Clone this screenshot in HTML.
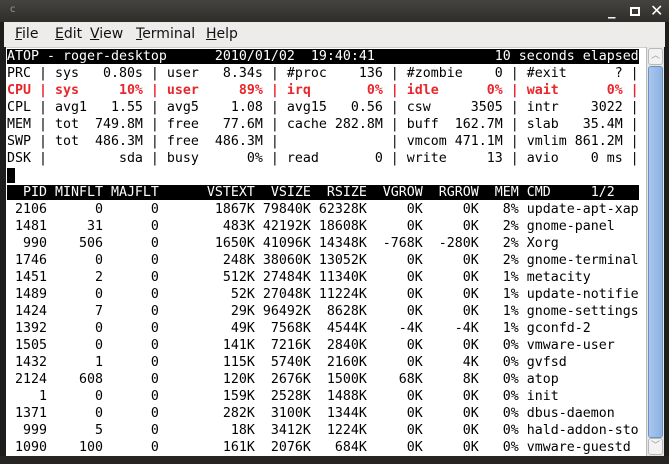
<!DOCTYPE html>
<html><head><meta charset="utf-8"><style>
*{margin:0;padding:0;box-sizing:border-box}
body{width:669px;height:464px;overflow:hidden;background:#1e1d1b;position:relative;font-family:"DejaVu Sans","Liberation Sans",sans-serif}
#title{position:absolute;left:0;top:0;width:669px;height:22px;background:linear-gradient(#45433f,#2f2e2b)}
#menu{position:absolute;left:4px;top:22px;width:661px;height:25px;background:#edeceb;font-size:14px;color:#111}
#menu span{position:absolute;top:4px}
#menu u{text-decoration:underline}
#term{position:absolute;left:6px;top:47px;width:640px;height:409px;background:#fff;border-top:1px solid #cfcfcf}
pre{position:absolute;left:7px;top:48px;font-family:"DejaVu Sans Mono","Liberation Mono",monospace;font-size:13.29px;line-height:17px;color:#000;white-space:pre}
.inv{background:#000;color:#fff}
.red{color:#e8262b;font-weight:bold}
#sb{position:absolute;left:646px;top:47px;width:18px;height:409px;background:#e6e6e6;border-left:1px solid #bbb}
#thumb{position:absolute;left:648px;top:66px;width:15px;height:372px;background:linear-gradient(90deg,#a9c7ec,#8bb2e2);border:1px solid #6a92c4;border-radius:3px}
.btn{position:absolute;left:648px;width:15px;height:17px;background:#f2f2f2;border:1px solid #b8b8b8;border-radius:3px;color:#999;font-size:9px;text-align:center;line-height:15px}
#bottom{position:absolute;left:0;top:456px;width:669px;height:8px;background:#262523}
.wb{position:absolute;top:3px;color:#fff;font-size:15px;font-weight:bold}
</style></head><body>
<div id="title"></div>
<span style="position:absolute;left:10px;top:4px;color:#999;font-size:10px">c</span>
<span class="wb" style="left:608px;top:1px">_</span>
<span style="position:absolute;left:630px;top:7px;width:10px;height:9px;border:2px solid #fff"></span>
<span class="wb" style="left:650px;top:1px;font-size:16px">✕</span>
<div id="menu">
<span style="left:11px"><u>F</u>ile</span>
<span style="left:51px"><u>E</u>dit</span>
<span style="left:86px"><u>V</u>iew</span>
<span style="left:132px"><u>T</u>erminal</span>
<span style="left:202px"><u>H</u>elp</span>
</div>
<div id="term"></div>
<div id="sb"></div>
<div class="btn" style="top:48px">︿</div>
<div id="thumb"></div>
<div class="btn" style="top:438px">﹀</div>
<div id="bottom"></div>
<pre><span class="inv">ATOP - roger-desktop      2010/01/02  19:40:41               10 seconds elapsed</span>
PRC | sys   0.80s | user   8.34s | #proc    136 | #zombie    0 | #exit      ? |
<span class="red">CPU | sys     10% | user     89% | irq       0% | idle      0% | wait      0% |</span>
CPL | avg1   1.55 | avg5    1.08 | avg15   0.56 | csw     3505 | intr    3022 |
MEM | tot  749.8M | free   77.6M | cache 282.8M | buff  162.7M | slab   35.4M |
SWP | tot  486.3M | free  486.3M |              | vmcom 471.1M | vmlim 861.2M |
DSK |         sda | busy      0% | read       0 | write     13 | avio    0 ms |
<span class="inv"> </span>
<span class="inv">  PID MINFLT MAJFLT      VSTEXT  VSIZE  RSIZE  VGROW  RGROW  MEM CMD     1/2   </span>
 2106      0      0       1867K 79840K 62328K     0K     0K   8% update-apt-xap
 1481     31      0        483K 42192K 18608K     0K     0K   2% gnome-panel
  990    506      0       1650K 41096K 14348K  -768K  -280K   2% Xorg
 1746      0      0        248K 38060K 13052K     0K     0K   2% gnome-terminal
 1451      2      0        512K 27484K 11340K     0K     0K   1% metacity
 1489      0      0         52K 27048K 11224K     0K     0K   1% update-notifie
 1424      7      0         29K 96492K  8628K     0K     0K   1% gnome-settings
 1392      0      0         49K  7568K  4544K    -4K    -4K   1% gconfd-2
 1505      0      0        141K  7216K  2840K     0K     0K   0% vmware-user
 1432      1      0        115K  5740K  2160K     0K     4K   0% gvfsd
 2124    608      0        120K  2676K  1500K    68K     8K   0% atop
    1      0      0        159K  2528K  1488K     0K     0K   0% init
 1371      0      0        282K  3100K  1344K     0K     0K   0% dbus-daemon
  999      5      0         18K  3412K  1224K     0K     0K   0% hald-addon-sto
 1090    100      0        161K  2076K   684K     0K     0K   0% vmware-guestd</pre>
</body></html>
